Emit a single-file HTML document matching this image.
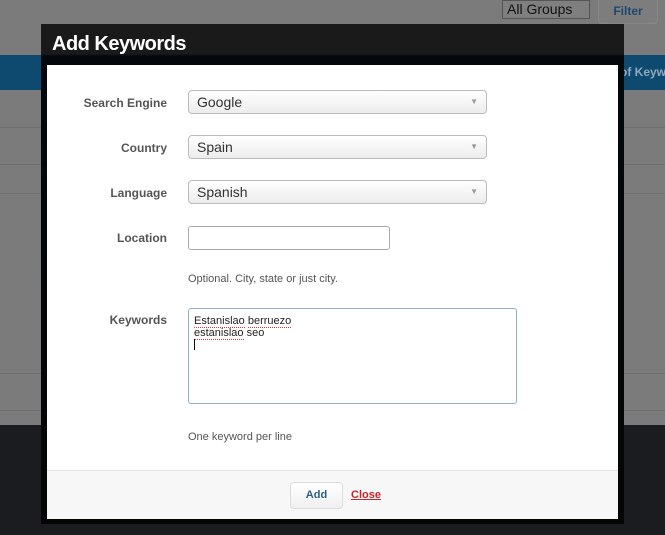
<!DOCTYPE html>
<html><head><style>
*{margin:0;padding:0;box-sizing:border-box}
body{width:665px;height:535px;overflow:hidden;background:#7b7b7b;font-family:"Liberation Sans",sans-serif;position:relative}
.abs{position:absolute}
.line{position:absolute;left:0;width:665px;height:1px;background:#6e6e6e}
.lbl{position:absolute;right:0;font-size:12px;font-weight:bold;color:#555;text-align:right}
.sel{position:absolute;left:188px;width:299px;height:24px;border:1px solid #bbb;border-radius:4px;background:linear-gradient(#fff,#ececec);font-size:14px;color:#333;padding:3px 8px}
.sel:after{content:"▼";position:absolute;right:8px;top:6px;font-size:8px;color:#999}
.sp{border-bottom:1px dotted #d33}
</style></head><body>
<div class="abs" style="left:502px;top:0;width:88px;height:19px;border:1px solid #555;background:#7f7f7f;font-size:14px;color:#111;padding:0 4px;line-height:17px">All Groups <span style="font-size:9px;margin-left:3px">▼</span></div>
<div class="abs" style="left:598px;top:0;width:60px;height:24px;border:1px solid #888;border-top:none;border-radius:0 0 4px 4px;background:#7d7d7d;font-size:12px;font-weight:bold;color:#1c4a6e;text-align:center;line-height:22px">Filter</div>
<div class="abs" style="left:0;top:55px;width:665px;height:35px;background:#0e4a70"></div>
<div class="abs" style="left:620px;top:65px;font-size:12px;font-weight:bold;color:#8fa9bb;white-space:nowrap">of Keywo</div>
<div class="line" style="top:127px"></div><div class="line" style="top:164px"></div><div class="line" style="top:193px"></div><div class="line" style="top:373px"></div><div class="line" style="top:410px"></div>
<div class="abs" style="left:0;top:425px;width:665px;height:110px;background:#1b1c1f"></div>
<div class="abs" style="left:41px;top:24px;width:583px;height:500px;background:linear-gradient(#1a1a1a 0,#1a1a1a 30px,#03080c 32px,#050505);"></div>
<div class="abs" style="left:52px;top:33px;font-size:20px;font-weight:bold;color:#fff;letter-spacing:-0.5px">Add Keywords</div>
<div class="abs" style="left:47px;top:65px;width:571px;height:454px;background:#fff">
 <div class="abs" style="left:0;top:405px;width:571px;height:49px;background:#f7f7f7;border-top:1px solid #e3e3e3"></div>
</div>
<div class="abs" style="left:47px;top:0;width:120px;height:535px">
 <div class="lbl" style="top:96px">Search Engine</div>
 <div class="lbl" style="top:141px">Country</div>
 <div class="lbl" style="top:186px">Language</div>
 <div class="lbl" style="top:231px">Location</div>
 <div class="lbl" style="top:313px">Keywords</div>
</div>
<div class="sel" style="top:90px">Google</div>
<div class="sel" style="top:135px">Spain</div>
<div class="sel" style="top:180px">Spanish</div>
<div class="abs" style="left:188px;top:226px;width:202px;height:24px;border:1px solid #aaa;border-radius:3px;background:#fff"></div>
<div class="abs" style="left:188px;top:273px;font-size:11px;color:#555">Optional. City, state or just city.</div>
<div class="abs" style="left:188px;top:308px;width:329px;height:96px;border:1px solid #8fb0c2;border-radius:3px;background:#fff;font-size:11px;color:#222;padding:6px 5px;line-height:12px"><span class="sp">Estanislao</span> <span class="sp">berruezo</span><br><span class="sp">estanislao</span> seo<br><span style="display:inline-block;width:1px;height:11px;background:#000"></span></div>
<div class="abs" style="left:188px;top:431px;font-size:11px;color:#555">One keyword per line</div>
<div class="abs" style="left:290px;top:482px;width:53px;height:27px;border:1px solid #ddd;border-radius:4px;background:linear-gradient(#fff,#f0f0f0);font-size:11px;font-weight:bold;color:#2b5f86;text-align:center;line-height:25px">Add</div>
<div class="abs" style="left:351px;top:489px;font-size:11px;font-weight:bold;color:#c0272d;text-decoration:underline">Close</div>
</body></html>
